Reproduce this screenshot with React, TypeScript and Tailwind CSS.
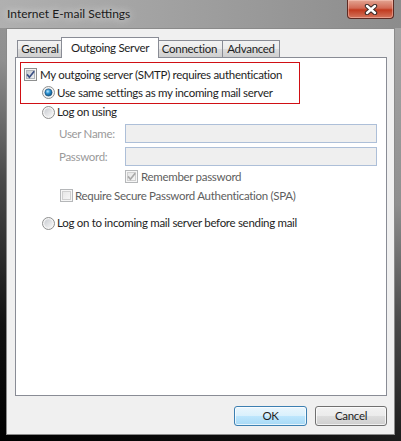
import { useId } from "react";

const font = "font-['Lato','Liberation_Sans',sans-serif]";

function CheckBox({ checked, disabled }: { checked?: boolean; disabled?: boolean }) {
  const id = useId();
  const border = disabled ? "#b5b7b9" : "#8e8f8f";
  const tick = disabled ? "#a9a9a9" : "#3b4f85";
  return (
    <svg width="13" height="13" viewBox="0 0 13 13" className="shrink-0">
      <defs>
        <linearGradient id={id} x1="0" y1="0" x2="1" y2="1">
          <stop offset="0" stopColor={disabled ? "#e6e6e6" : "#c4c8cd"} />
          <stop offset="1" stopColor={disabled ? "#f7f7f7" : "#f2f3f4"} />
        </linearGradient>
      </defs>
      <rect x="0.5" y="0.5" width="12" height="12" fill="#f6f6f6" stroke={border} />
      <rect x="2.5" y="2.5" width="8" height="8" fill={`url(#${id})`} stroke={disabled ? "#d0d0d0" : "#b0b5bb"} />
      {checked && (
        <path d="M3 6.4 L5.4 9.2 L10.2 3.2" fill="none" stroke={tick} strokeWidth="1.7" />
      )}
    </svg>
  );
}

function Radio({ selected }: { selected?: boolean }) {
  const id = useId();
  return (
    <svg width="13" height="13" viewBox="0 0 13 13" className="shrink-0">
      <defs>
        <linearGradient id={`${id}a`} x1="0" y1="0" x2="1" y2="1">
          <stop offset="0" stopColor="#c9ccd1" />
          <stop offset="1" stopColor="#f7f7f7" />
        </linearGradient>
        <radialGradient id={`${id}b`} cx="0.4" cy="0.35" r="0.7">
          <stop offset="0" stopColor="#b8e8ff" />
          <stop offset="0.45" stopColor="#2a8fd0" />
          <stop offset="1" stopColor="#0d4f7c" />
        </radialGradient>
      </defs>
      <circle cx="6.5" cy="6.5" r="6" fill="#f4f4f4" stroke="#8e8f8f" />
      <circle cx="6.5" cy="6.5" r="4.2" fill={`url(#${id}a)`} />
      {selected && <circle cx="6.5" cy="6.5" r="3.6" fill={`url(#${id}b)`} stroke="#1d4f77" strokeWidth="0.6" />}
    </svg>
  );
}

const tabBg =
  "bg-[linear-gradient(180deg,#f2f2f2_0%,#ebebeb_50%,#dddddd_50%,#cfcfcf_100%)]";

export default function App() {
  return (
    <div
      className={`${font} flex h-[441px] w-[401px] flex-col whitespace-nowrap bg-[linear-gradient(200deg,#a9a9a9_0%,#8f8f8f_35%,#4a4a4a_55%,#111_80%,#000_100%)] text-[11.5px] tracking-[-0.3px] text-[#1e1e1e]`}
    >
      {/* title bar */}
      <div className="relative flex h-[28px] shrink-0 items-center bg-[linear-gradient(90deg,#b0b0b0_0%,#a2a2a2_40%,#8c8c8c_100%)] pl-[7px]">
        <span className="pb-[1px] text-[12px] tracking-normal text-[#1a1a1a] [text-shadow:0_0_8px_rgba(255,255,255,0.95)]">
          Internet E-mail Settings
        </span>
        <div className="absolute left-[347px] top-0 flex h-[19px] w-[47px] items-center justify-center rounded-b-[4px] border border-t-0 border-[#5d2a22] bg-[linear-gradient(180deg,#e3a593_0%,#d26a55_45%,#c13a1f_55%,#d4765e_100%)] shadow-[inset_0_0_0_1px_rgba(255,210,200,0.45)]">
          <svg width="14" height="11" viewBox="0 0 14 11">
            <path d="M3 2 L11 9 M11 2 L3 9" stroke="#3a2a28" strokeWidth="4.4" strokeLinecap="round" />
            <path d="M3 2 L11 9 M11 2 L3 9" stroke="#ffffff" strokeWidth="2.4" strokeLinecap="round" />
          </svg>
        </div>
      </div>

      {/* client area */}
      <div className="mb-[6px] ml-[6px] mr-[6px] flex flex-1 flex-col border border-[#8a8a8a] bg-[#f0f0f0]">
        {/* tabs */}
        <div className="ml-[10px] mt-[8px] flex items-end">
          <div className={`flex h-[17px] w-[46px] items-center justify-center border border-b-0 border-[#898c95] ${tabBg}`}>
            General
          </div>
          <div className="relative z-10 -mx-[2px] -mb-px flex h-[21px] w-[98px] items-center justify-center border border-b-0 border-[#898c95] bg-white pb-[1px]">
            Outgoing Server
          </div>
          <div className={`flex h-[17px] w-[66px] items-center justify-center border border-b-0 border-l-0 border-[#898c95] ${tabBg}`}>
            Connection
          </div>
          <div className={`flex h-[17px] w-[57px] items-center justify-center border border-b-0 border-l-0 border-[#898c95] ${tabBg}`}>
            Advanced
          </div>
        </div>

        {/* tab page */}
        <div className="ml-[8px] mr-[7px] flex h-[339px] flex-col border border-[#898c95] bg-white">
          <div className="ml-[4px] mt-[4px] flex h-[42px] w-[280px] flex-col border border-[#d00f14] pt-[3px]">
            <div className="flex h-[17px] items-center gap-[3px] pl-[3px]">
              <CheckBox checked />
              <span>My outgoing server (SMTP) requires authentication</span>
            </div>
            <div className="flex h-[19px] items-center gap-[2px] pl-[21px]">
              <Radio selected />
              <span>Use same settings as my incoming mail server</span>
            </div>
          </div>

          <div className="flex h-[16px] items-center gap-[2px] pl-[26px]">
            <Radio />
            <span>Log on using</span>
          </div>

          <div className="mt-[4px] flex h-[19px] items-center pl-[43px]">
            <span className="w-[66px] text-[#9a9a9a]">User Name:</span>
            <div className="h-[19px] w-[252px] border border-[#adbfd8] bg-[#efefef]" />
          </div>
          <div className="mt-[4px] flex h-[19px] items-center pl-[43px]">
            <span className="w-[66px] text-[#9a9a9a]">Password:</span>
            <div className="h-[19px] w-[252px] border border-[#adbfd8] bg-[#efefef]" />
          </div>

          <div className="mt-[4px] flex h-[13px] items-center gap-[3px] pl-[109px] text-[#5e5e5e]">
            <CheckBox checked disabled />
            <span>Remember password</span>
          </div>
          <div className="mt-[6px] flex h-[13px] items-center gap-[2px] pl-[44px] text-[#5e5e5e]">
            <CheckBox disabled />
            <span>Require Secure Password Authentication (SPA)</span>
          </div>

          <div className="mt-[13px] flex h-[16px] items-center gap-[2px] pl-[26px]">
            <Radio />
            <span>Log on to incoming mail server before sending mail</span>
          </div>
        </div>

        {/* buttons */}
        <div className="mr-[7px] mt-[10px] flex justify-end gap-[8px]">
          <button className="h-[20px] w-[73px] rounded-[3px] border border-[#3c7fb1] bg-[linear-gradient(180deg,#eaf6fd_0%,#d9f0fc_50%,#bee6fd_50%,#a7d9f5_100%)] text-[11.5px] text-[#1e1e1e] shadow-[inset_0_0_0_1px_rgba(255,255,255,0.7)]">
            OK
          </button>
          <button className="h-[20px] w-[72px] rounded-[3px] border border-[#707070] bg-[linear-gradient(180deg,#f2f2f2_0%,#ebebeb_50%,#dddddd_50%,#cfcfcf_100%)] text-[11.5px] text-[#1e1e1e] shadow-[inset_0_0_0_1px_rgba(255,255,255,0.7)]">
            Cancel
          </button>
        </div>
      </div>
    </div>
  );
}
